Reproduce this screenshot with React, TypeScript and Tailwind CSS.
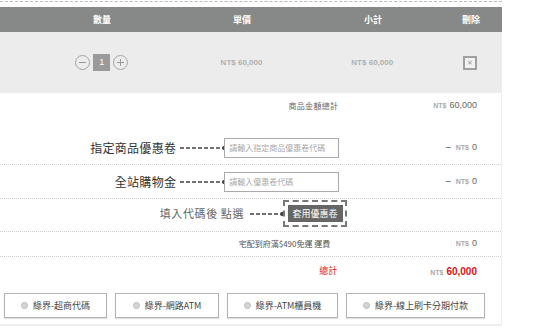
import React from 'react';

const cjk = "font-['Noto_Sans_CJK_TC','Noto_Sans',sans-serif]";
const num = "font-['Liberation_Sans',Arial,sans-serif]";

function Connector({ width }: { width: number }) {
    return (
        <svg width={width} height="6" viewBox={`0 0 ${width} 6`} className="shrink-0">
            <line x1="1" y1="3" x2={width - 3} y2="3" stroke="#444" strokeWidth="1.4" strokeDasharray="4 2" />
            <circle cx={width - 2.5} cy="3" r="2.3" fill="#444" />
        </svg>
    );
}

function Amount({ value, minus }: { value: string; minus?: boolean }) {
    return (
        <div className={`flex items-baseline justify-end gap-[3px] ${num}`}>
            {minus && <span className="text-[9px] text-[#444] mr-[2px]">–</span>}
            <span className="text-[7px] font-bold text-[#aaa]">NT$</span>
            <span className="text-[9px] text-[#666]">{value}</span>
        </div>
    );
}

function PayButton({ label, width }: { label: string; width: number }) {
    return (
        <button
            style={{ width }}
            className="h-[25px] bg-white border border-[#b3b3b3] shadow-[0_1px_1px_rgba(0,0,0,0.12)] flex items-center justify-center gap-[5px] text-[9px] text-[#444]"
        >
            <span className="w-[7px] h-[7px] rounded-full bg-[#d4d4d4] border border-[#bdbdbd]" />
            {label}
        </button>
    );
}

export default function App() {
    return (
        <div className={`w-[536px] h-[336px] bg-white overflow-hidden ${cjk}`}>
            <div className="w-[502px]">
                <div className="mt-px border-t border-dashed border-[#bbbbbb]" />

                {/* Table header */}
                <div className="mt-[5px] h-[25px] bg-[#878988] flex items-center text-white text-[9px] font-bold">
                    <div className="w-[40px]" />
                    <div className="w-[124px] text-center">數量</div>
                    <div className="w-[156px] text-center">單價</div>
                    <div className="w-[106px] text-center">小計</div>
                    <div className="w-[14px]" />
                    <div className="w-[62px] text-center">刪除</div>
                </div>

                <div className="border-r border-b-2 border-[#eeeeee]">
                    {/* Product row */}
                    <div className="h-[61px] bg-[#ececec] flex items-center">
                        <div className="w-[40px]" />
                        <div className="w-[124px] flex items-center justify-center gap-[2px]">
                            <span className="w-[15px] h-[15px] rounded-full border border-[#a5a5a5] flex items-center justify-center">
                                <span className="w-[7px] h-px bg-[#999]" />
                            </span>
                            <span className="w-[17px] h-[17px] bg-[#9a9a9a] text-white text-[9px] flex items-center justify-center mx-[1px] font-['Liberation_Sans',sans-serif]">1</span>
                            <span className="w-[15px] h-[15px] rounded-full border border-[#a5a5a5] flex items-center justify-center relative">
                                <span className="w-[7px] h-px bg-[#999]" />
                                <span className="absolute w-px h-[7px] bg-[#999]" />
                            </span>
                        </div>
                        <div className={`w-[156px] text-center text-[8px] font-bold text-[#b0b0b0] ${num}`}>NT$ 60,000</div>
                        <div className={`w-[106px] text-center text-[8px] font-bold text-[#b0b0b0] ${num}`}>NT$ 60,000</div>
                        <div className="w-[14px]" />
                        <div className="w-[62px] flex justify-center">
                            <span className="w-[14px] h-[14px] border-2 border-[#a0a0a0] bg-[#f2f2f2] flex items-center justify-center text-[7px] text-[#999] leading-none">✕</span>
                        </div>
                    </div>

                    {/* Subtotal */}
                    <div className="h-[26px] flex items-center">
                        <div className="w-[340px] pr-[1px] text-right text-[8px] tracking-[0.3px] text-[#666]">商品金額總計</div>
                        <div className="w-[162px] pr-[24px]"><Amount value="60,000" /></div>
                    </div>

                    {/* Coupon */}
                    <div className="pt-[19px] pb-[6px] flex items-center border-b border-dotted border-[#cfcfcf]">
                        <div className="w-[340px] flex items-center justify-end">
                            <span className="text-[12px] tracking-[0.3px] text-[#333] mr-[3px]">指定商品優惠卷</span>
                            <Connector width={48} />
                            <div className="-ml-[3px] w-[115px] h-[20px] border border-[#aaa] bg-white flex items-center pl-[4px] text-[8px] text-[#aaa]">請輸入指定商品優惠卷代碼</div>
                        </div>
                        <div className="w-[162px] pr-[24px]"><Amount value="0" minus /></div>
                    </div>

                    {/* Store credit */}
                    <div className="pt-[7px] pb-[6px] flex items-center border-b border-dotted border-[#cfcfcf]">
                        <div className="w-[340px] flex items-center justify-end">
                            <span className="text-[12px] tracking-[0.3px] text-[#333] mr-[3px]">全站購物金</span>
                            <Connector width={48} />
                            <div className="-ml-[3px] w-[115px] h-[20px] border border-[#aaa] bg-white flex items-center pl-[4px] text-[8px] text-[#aaa]">請輸入優惠卷代碼</div>
                        </div>
                        <div className="w-[162px] pr-[24px]"><Amount value="0" minus /></div>
                    </div>

                    {/* Apply */}
                    <div className="pt-px pb-[4px] flex items-center border-b border-dotted border-[#cfcfcf]">
                        <div className="w-[347px] flex items-center justify-end">
                            <span className="text-[11px] tracking-[0.6px] text-[#666] mr-[5px]">填入代碼後 點選</span>
                            <Connector width={36} />
                            <div className="-ml-[2px] w-[64px] h-[27px] border-2 border-dashed border-[#777] flex items-center justify-center">
                                <span className="w-[55px] h-[17px] bg-[#666] text-white text-[9px] flex items-center justify-center">套用優惠卷</span>
                            </div>
                        </div>
                    </div>

                    {/* Shipping */}
                    <div className="h-[25px] flex items-center border-b border-dotted border-[#cfcfcf]">
                        <div className="w-[340px] pr-[9px] text-right text-[8px] text-[#555]">宅配到府滿$490免運 運費</div>
                        <div className="w-[162px] pr-[24px]"><Amount value="0" /></div>
                    </div>

                    {/* Total */}
                    <div className="h-[28px] flex items-center">
                        <div className="w-[340px] pr-[2px] text-right text-[9px] text-[#e02020]">總計</div>
                        <div className={`w-[162px] pr-[24px] flex items-baseline justify-end gap-[3px] ${num}`}>
                            <span className="text-[7px] font-bold text-[#aaa]">NT$</span>
                            <span className="text-[10px] font-bold text-[#e01010]">60,000</span>
                        </div>
                    </div>

                    {/* Payment options */}
                    <div className="pt-[8px] pb-[6px] pl-[4px] flex items-center gap-[8px]">
                        <PayButton label="綠界-超商代碼" width={103} />
                        <PayButton label="綠界-網路ATM" width={104} />
                        <PayButton label="綠界-ATM櫃員機" width={111} />
                        <PayButton label="綠界-線上刷卡分期付款" width={139} />
                    </div>
                </div>
            </div>
        </div>
    );
}
